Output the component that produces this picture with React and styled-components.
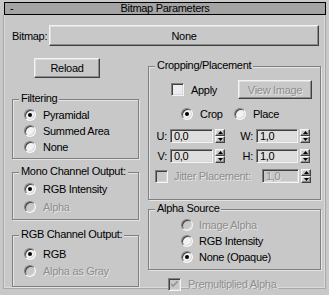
import styled, { createGlobalStyle, css } from 'styled-components'

const GlobalStyle = createGlobalStyle`
  html, body {
    margin: 0;
    padding: 0;
    background: #c8c8c8;
  }
  body {
    font-family: "Liberation Sans", Arial, sans-serif;
    font-size: 11px;
    letter-spacing: -0.3px;
    color: #000;
  }
`

const raised = css`
  border: 1px solid;
  border-color: #f4f4f4 #404040 #404040 #f4f4f4;
  box-shadow: inset -1px -1px 0 #8c8c8c, inset 1px 1px 0 #dcdcdc;
  background: #c8c8c8;
`

const sunken = css`
  border: 1px solid;
  border-color: #808080 #f4f4f4 #f4f4f4 #808080;
  box-shadow: inset 1px 1px 0 #404040, inset -1px -1px 0 #d8d8d8;
`

const Root = styled.div`
  width: 329px;
  height: 295px;
  padding-top: 2px;
  box-sizing: border-box;
`

const Header = styled.div`
  height: 13px;
  margin: 0 3px 0 4px;
  border: 1px solid #000;
  background: #a4a4a4;
  display: flex;
  align-items: center;
  box-sizing: border-box;
  line-height: 11px;
`

const Minus = styled.span`
  width: 16px;
  padding-left: 5px;
`

const Title = styled.span`
  flex: 1;
  text-align: center;
  padding-right: 21px;
`

const Panel = styled.div`
  margin: 0 3px;
  height: 274px;
  box-sizing: border-box;
  border: 1px solid #a8a8a8;
  border-top: none;
  box-shadow: inset 1px 0 0 #dadada, inset -1px -1px 0 #dadada;
  padding: 10px 0 0 8px;
`

const BitmapRow = styled.div`
  display: flex;
  align-items: center;
  height: 21px;
`

const RowLabel = styled.span`
  width: 37px;
`

const Button = styled.div`
  ${raised};
  box-sizing: border-box;
  width: ${p => p.$w}px;
  height: ${p => p.$h || 20}px;
  margin-top: ${p => p.$mt || 0}px;
  margin-left: ${p => (p.$ml === 'auto' ? 'auto' : `${p.$ml || 0}px`)};
  margin-right: ${p => p.$mr || 0}px;
  display: flex;
  align-items: center;
  justify-content: center;
  color: ${p => (p.$disabled ? '#8e8e8e' : '#000')};
  text-shadow: ${p => (p.$disabled ? '1px 1px 0 #e6e6e6' : 'none')};
`

const Columns = styled.div`
  display: grid;
  grid-template-columns: 127px 173px;
  column-gap: 9px;
  margin-top: 6px;
  align-items: start;
`

const Column = styled.div`
  display: flex;
  flex-direction: column;
`

const Group = styled.div`
  position: relative;
  box-sizing: border-box;
  height: ${p => p.$h}px;
  margin-top: ${p => p.$mt}px;
  border: 1px solid #808080;
  box-shadow: 1px 1px 0 #e4e4e4, inset 1px 1px 0 #e4e4e4;
  padding: ${p => p.$pt}px 0 0 ${p => p.$pl}px;
  display: flex;
  flex-direction: column;
  row-gap: ${p => p.$gap || 0}px;
`

const Legend = styled.span`
  position: absolute;
  top: -8px;
  left: 6px;
  padding: 0 2px;
  line-height: 13px;
  background: #c8c8c8;
`

const Option = styled.label`
  display: flex;
  align-items: center;
  height: 12px;
  column-gap: ${p => p.$gap || 7}px;
  width: ${p => (p.$w ? `${p.$w}px` : 'auto')};
  color: ${p => (p.$disabled ? '#8e8e8e' : '#000')};
  text-shadow: ${p => (p.$disabled ? '1px 1px 0 #e6e6e6' : 'none')};
  white-space: nowrap;
`

const RadioDot = styled.span`
  width: 12px;
  height: 12px;
  flex: none;
  box-sizing: border-box;
  border-radius: 50%;
  border: 1px solid;
  border-color: #808080 #f8f8f8 #f8f8f8 #808080;
  box-shadow: inset 1px 1px 0 #404040, inset -1px -1px 0 #d8d8d8;
  background: ${p => (p.$disabled ? '#c8c8c8' : '#f2f2f2')};
  display: flex;
  align-items: center;
  justify-content: center;
  &::after {
    content: '';
    width: 4px;
    height: 4px;
    border-radius: 50%;
    background: ${p => (p.$on ? '#000' : 'transparent')};
  }
`

const Box = styled.span`
  ${sunken};
  width: 13px;
  height: 13px;
  flex: none;
  box-sizing: border-box;
  background: ${p => (p.$disabled ? '#c8c8c8' : '#ececec')};
  display: flex;
  align-items: center;
  justify-content: center;
`

const Radio = ({ on, disabled, label, w, gap }) => (
  <Option $disabled={disabled} $w={w} $gap={gap}>
    <RadioDot $on={on} $disabled={disabled} />
    {label}
  </Option>
)

const Check = ({ on, disabled, label, gap }) => (
  <Option $disabled={disabled} $gap={gap}>
    <Box $disabled={disabled}>
      {on && (
        <svg width="7" height="7" viewBox="0 0 7 7">
          <path d="M0 2 L0 4 L2 6 L7 1 L7 -1 L2 4 Z" fill={disabled ? '#8e8e8e' : '#000'} />
        </svg>
      )}
    </Box>
    {label}
  </Option>
)

const CropRow = styled.div`
  display: flex;
  align-items: center;
  height: ${p => p.$h}px;
  margin-top: ${p => p.$mt || 0}px;
  padding-left: ${p => p.$pl || 0}px;
`

const SpinLabel = styled.span`
  width: ${p => p.$w}px;
  text-align: right;
  padding-right: 3px;
  box-sizing: border-box;
`

const Field = styled.span`
  ${sunken};
  box-sizing: border-box;
  width: ${p => p.$w}px;
  height: ${p => p.$h || 14}px;
  background: ${p => (p.$disabled ? '#c8c8c8' : '#dedede')};
  color: ${p => (p.$disabled ? '#8e8e8e' : '#000')};
  text-shadow: ${p => (p.$disabled ? '1px 1px 0 #e6e6e6' : 'none')};
  padding-left: 3px;
  line-height: 12px;
`

const Arrows = styled.span`
  display: flex;
  flex-direction: column;
  width: 10px;
  height: 14px;
  margin-left: 2px;
`

const ArrowBtn = styled.span`
  ${raised};
  box-sizing: border-box;
  height: 7px;
  display: flex;
  align-items: center;
  justify-content: center;
`

const SpinWrap = styled.span`
  display: flex;
  align-items: center;
  margin-left: ${p => (p.$auto ? 'auto' : '0')};
  margin-right: ${p => p.$mr || 0}px;
`

const Spinner = ({ value, w, disabled, auto, mr }) => (
  <SpinWrap $auto={auto} $mr={mr}>
    <Field $w={w} $disabled={disabled}>{value}</Field>
    <Arrows>
      <ArrowBtn>
        <svg width="5" height="3" viewBox="0 0 5 3"><path d="M2.5 0 L5 3 L0 3 Z" fill="#000" /></svg>
      </ArrowBtn>
      <ArrowBtn>
        <svg width="5" height="3" viewBox="0 0 5 3"><path d="M0 0 L5 0 L2.5 3 Z" fill="#000" /></svg>
      </ArrowBtn>
    </Arrows>
  </SpinWrap>
)

const PremultRow = styled.div`
  margin-top: 8px;
  padding-left: 20px;
`

export default function App () {
  return (
    <Root>
      <GlobalStyle />
      <Header>
        <Minus>-</Minus>
        <Title>Bitmap Parameters</Title>
      </Header>
      <Panel>
        <BitmapRow>
          <RowLabel>Bitmap:</RowLabel>
          <Button $w={270} $h={21}>None</Button>
        </BitmapRow>
        <Columns>
          <Column>
            <Button $w={66} $ml={22} $mt={6}>Reload</Button>
            <Group $h={60} $mt={21} $pt={9} $pl={11} $gap={4}>
              <Legend>Filtering</Legend>
              <Radio on label="Pyramidal" />
              <Radio label="Summed Area" />
              <Radio label="None" />
            </Group>
            <Group $h={48} $mt={13} $pt={10} $pl={11} $gap={6}>
              <Legend>Mono Channel Output:</Legend>
              <Radio on label="RGB Intensity" />
              <Radio disabled label="Alpha" />
            </Group>
            <Group $h={52} $mt={15} $pt={12} $pl={11} $gap={5}>
              <Legend>RGB Channel Output:</Legend>
              <Radio on label="RGB" />
              <Radio disabled label="Alpha as Gray" />
            </Group>
          </Column>
          <Column>
            <Group $h={134} $mt={14} $pt={13} $pl={0}>
              <Legend>Cropping/Placement</Legend>
              <CropRow $h={19} $pl={22}>
                <Check label="Apply" />
                <Button $w={74} $h={19} $mr={8} $ml="auto" $disabled>View Image</Button>
              </CropRow>
              <CropRow $h={12} $mt={9} $pl={32}>
                <Radio on label="Crop" w={53} />
                <Radio label="Place" />
              </CropRow>
              <CropRow $h={14} $mt={9}>
                <SpinLabel $w={21}>U:</SpinLabel>
                <Spinner value="0,0" w={43} />
                <SpinLabel $w={31}>W:</SpinLabel>
                <Spinner value="1,0" w={42} />
              </CropRow>
              <CropRow $h={14} $mt={6}>
                <SpinLabel $w={21}>V:</SpinLabel>
                <Spinner value="0,0" w={43} />
                <SpinLabel $w={31}>H:</SpinLabel>
                <Spinner value="1,0" w={42} />
              </CropRow>
              <CropRow $h={14} $mt={6} $pl={6}>
                <Check disabled label="Jitter Placement:" gap={6} />
                <Spinner value="1,0" w={37} disabled auto mr={9} />
              </CropRow>
            </Group>
            <Group $h={61} $mt={9} $pt={9} $pl={32} $gap={4}>
              <Legend>Alpha Source</Legend>
              <Radio disabled label="Image Alpha" gap={6} />
              <Radio label="RGB Intensity" gap={6} />
              <Radio on label="None (Opaque)" gap={6} />
            </Group>
            <PremultRow>
              <Check on disabled label="Premultiplied Alpha" gap={7} />
            </PremultRow>
          </Column>
        </Columns>
      </Panel>
    </Root>
  )
}
